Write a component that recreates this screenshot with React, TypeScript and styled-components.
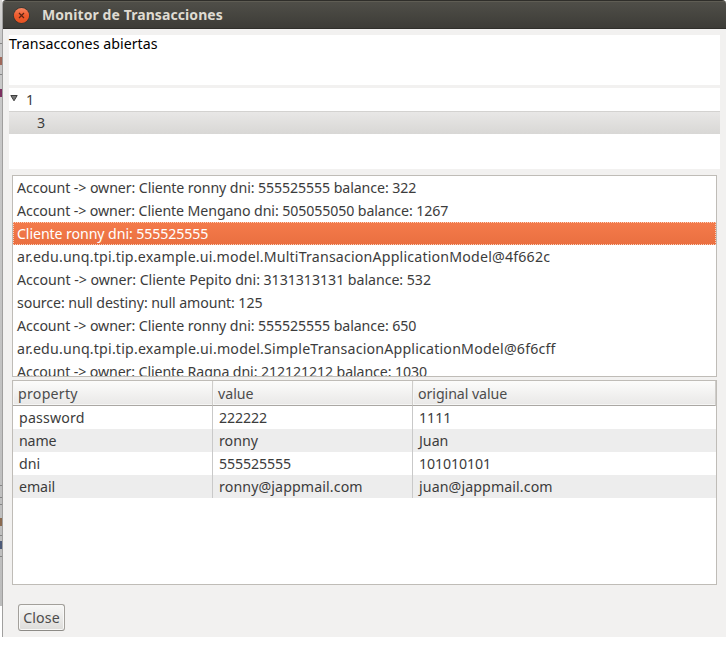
import React from "react";
import styled, { createGlobalStyle } from "styled-components";

const GlobalStyle = createGlobalStyle`
  * { box-sizing: border-box; }
  body { margin: 0; background: #fff; font-family: "Noto Sans", sans-serif; font-size: 14.2px; color: #3c3c3c; overflow: hidden; }
`;

const Screen = styled.div`
  display: flex;
  width: 728px;
  height: 645px;
`;

const Backdrop = styled.div`
  position: relative;
  width: 2px;
  height: 606px;
  overflow: hidden;
  background: linear-gradient(#d8d7d5 0, #c9c9c9 40px, #bdbdbd 100%);
`;

const Mark = styled.i<{ $y: number; $h?: number; $c?: string }>`
  position: absolute;
  left: 0;
  width: 2px;
  top: ${(p) => p.$y}px;
  height: ${(p) => p.$h ?? 1}px;
  background: ${(p) => p.$c ?? "#858585"};
`;

const Window = styled.main`
  display: flex;
  flex-direction: column;
  width: 724px;
  height: 637px;
  background: #f2f1f0;
  border-left: 1px solid #a09f9e;
  border-radius: 4px 4px 0 0;
  overflow: hidden;
`;

const TitleBar = styled.header`
  display: flex;
  align-items: center;
  gap: 12px;
  flex: none;
  height: 29px;
  margin-left: -1px;
  padding: 1px 0 0 11px;
  background: linear-gradient(#504f49, #3d3c37);
  border-top: 1px solid #2f2e2a;
  border-bottom: 1px solid #302f2b;
  box-shadow: inset 0 1px #5f5d54;
  color: #dfdbd2;
  font-weight: 700;
  font-size: 14px;
  line-height: 19px;

  span {
    padding-bottom: 2px;
  }
`;

const TextRun = styled.span<{ $ls?: number }>`
  white-space: pre;
  letter-spacing: ${(p) => p.$ls ?? 0}px;
`;

const Shell = styled.section`
  display: flex;
  flex-direction: column;
  padding: 6px 6px 0;
`;

const Banner = styled.div`
  height: 50px;
  background: #fff;
  color: #000;
  line-height: 17px;
`;

const Tree = styled.div`
  height: 81px;
  margin-top: 3px;
  background: #fff;
`;

const TreeRow = styled.div<{ $depth: number; $selected?: boolean }>`
  display: flex;
  align-items: center;
  gap: 8px;
  height: 23px;
  line-height: 20px;
  padding-left: ${(p) => (p.$depth ? 28 : 1)}px;
  background: ${(p) => (p.$selected ? "linear-gradient(#e9e8e7, #d8d7d5)" : "#fff")};
  box-shadow: ${(p) => (p.$selected ? "inset 0 1px #d3d2d0" : "none")};

  svg {
    margin-bottom: 3px;
  }
`;

const Frame = styled.div<{ $h: number; $gap: number }>`
  width: 705px;
  height: ${(p) => p.$h}px;
  margin: ${(p) => p.$gap}px 0 0 3px;
  border: 1px solid #bfbcb7;
  background: #fff;
  overflow: hidden;
`;

const ListRow = styled.div<{ $selected?: boolean }>`
  height: 23px;
  line-height: 22px;
  padding: 0 3px;
  border: 1px dotted ${(p) => (p.$selected ? "#fad0bd" : "transparent")};
  background: ${(p) => (p.$selected ? "linear-gradient(#f47b4b, #ea6f40) border-box" : "none")};
  color: ${(p) => (p.$selected ? "#fff" : "inherit")};
`;

const Grid = styled.div`
  display: grid;
  grid-template-columns: 200px 200px 303px;
`;

const Head = styled.div`
  height: 25px;
  line-height: 25px;
  padding-left: 5px;
  border-right: 1px solid #cfcdca;
  border-bottom: 1px solid #aaa7a3;
  background: linear-gradient(#fcfcfb, #e9e8e7);
  box-shadow: inset 1px -1px #f6f6f5;
  color: #4c4c4c;
`;

const Cell = styled.div<{ $odd: boolean; $last: boolean }>`
  height: 23px;
  line-height: 23px;
  padding-left: 6px;
  border-right: ${(p) => (p.$last ? "none" : "1px solid #c9c9c9")};
  background: ${(p) => (p.$odd ? "#ededed" : "#fff")};
`;

const CloseButton = styled.button`
  width: 47px;
  height: 27px;
  margin: 19px 0 0 9px;
  padding: 0;
  border: 1px solid #a3a09b;
  border-bottom-color: #8d8b87;
  border-radius: 3px;
  background: linear-gradient(#f8f8f7, #dddcda);
  box-shadow: inset 0 0 0 1px #f8f8f7;
  font: inherit;
  color: #4c4c4c;
`;

const CloseIcon = () => (
  <svg width="17" height="17" viewBox="0 0 17 17">
    <defs>
      <linearGradient id="orb" x2="0" y2="1">
        <stop stopColor="#f58763" />
        <stop offset=".5" stopColor="#ef5b2d" />
        <stop offset="1" stopColor="#e65322" />
      </linearGradient>
    </defs>
    <circle cx="8.5" cy="8.5" r="8.2" fill="#37342e" />
    <circle cx="8.5" cy="8.5" r="7.6" fill="url(#orb)" />
    <path d="M6 6l5 5M11 6l-5 5" stroke="#5a2413" strokeWidth="1.2" />
  </svg>
);

const Expander = () => (
  <svg width="8" height="8" viewBox="0 0 8 8">
    <path d="M.8 1.5h6.4L4 6.8z" fill="#777" stroke="#3e3e3e" />
  </svg>
);

const entries: [string, number][] = [
  ["Account -> owner: Cliente ronny dni: 555525555 balance: 322", -0.1],
  ["Account -> owner: Cliente Mengano dni: 505055050 balance: 1267", -0.11],
  ["Cliente ronny dni: 555525555", -0.1],
  ["ar.edu.unq.tpi.tip.example.ui.model.MultiTransacionApplicationModel@4f662c", 0.18],
  ["Account -> owner: Cliente Pepito dni: 3131313131 balance: 532", -0.05],
  ["source: null destiny: null amount: 125", -0.1],
  ["Account -> owner: Cliente ronny dni: 555525555 balance: 650", -0.1],
  ["ar.edu.unq.tpi.tip.example.ui.model.SimpleTransacionApplicationModel@6f6cff", 0.19],
  ["Account -> owner: Cliente Ragna dni: 212121212 balance: 1030", -0.11],
];

const headings: [string, number][] = [["property", 0.25], ["value", 0], ["original value", -0.07]];

const rows: [string, number][][] = [
  [["password", 0.17], ["222222", -0.1], ["1111", 0]],
  [["name", -0.15], ["ronny", 0], ["Juan", 0]],
  [["dni", 0], ["555525555", -0.1], ["101010101", -0.1]],
  [["email", -0.1], ["ronny@jappmail.com", 0.11], ["juan@jappmail.com", 0.1]],
];

export default function App() {
  return (
    <Screen>
      <GlobalStyle />
      <Backdrop>
        <Mark $y={43} />
        <Mark $y={57} $h={8} $c="#a0685a" />
        <Mark $y={74} />
        <Mark $y={89} $h={8} $c="#7c3060" />
        <Mark $y={485} />
        <Mark $y={497} />
        <Mark $y={504} />
        <Mark $y={518} $h={8} $c="#8a6a50" />
        <Mark $y={535} />
        <Mark $y={541} $h={8} $c="#4c5a78" />
        <Mark $y={556} />
      </Backdrop>
      <Window>
        <TitleBar>
          <CloseIcon />
          <TextRun $ls={0.08}>Monitor de Transacciones</TextRun>
        </TitleBar>
        <Shell>
          <Banner><TextRun $ls={0.04}>Transaccones abiertas</TextRun></Banner>
          <Tree>
            <TreeRow $depth={0}><Expander /><TextRun>1</TextRun></TreeRow>
            <TreeRow $depth={1} $selected><TextRun>3</TextRun></TreeRow>
          </Tree>
          <Frame $h={202} $gap={6}>
            {entries.map(([text, ls], i) => (
              <ListRow key={text} $selected={i === 2}><TextRun $ls={ls}>{text}</TextRun></ListRow>
            ))}
          </Frame>
          <Frame $h={205} $gap={3}>
            <Grid>
              {headings.map(([text, ls]) => <Head key={text}><TextRun $ls={ls}>{text}</TextRun></Head>)}
              {rows.map((row, r) =>
                row.map(([text, ls], c) => (
                  <Cell key={text} $odd={r % 2 === 1} $last={c === 2}><TextRun $ls={ls}>{text}</TextRun></Cell>
                ))
              )}
            </Grid>
          </Frame>
          <CloseButton><TextRun $ls={0.1}>Close</TextRun></CloseButton>
        </Shell>
      </Window>
    </Screen>
  );
}
